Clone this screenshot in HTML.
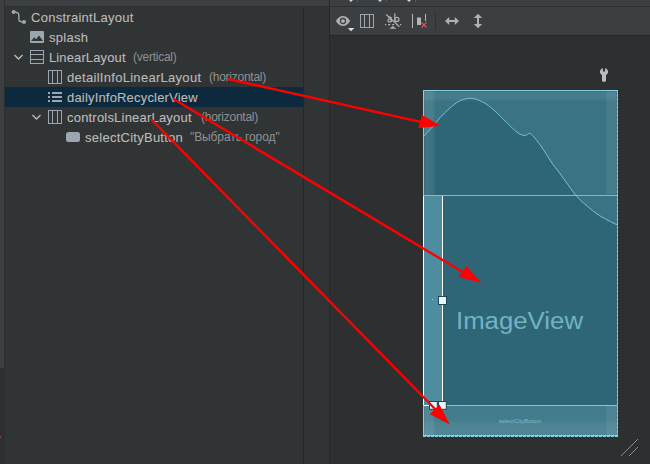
<!DOCTYPE html>
<html><head><meta charset="utf-8">
<style>
html,body{margin:0;padding:0;}
body{width:650px;height:464px;position:relative;overflow:hidden;background:#313434;font-family:"Liberation Sans",sans-serif;}
.a{position:absolute;}
.t{position:absolute;white-space:pre;font-size:13px;color:#bbbbbb;line-height:16px;-webkit-text-stroke:0.1px #bbbbbb;}
.g{position:absolute;white-space:pre;font-size:12px;color:#8e9193;line-height:14px;letter-spacing:-0.25px}
</style></head><body>
<!-- left strip -->
<div class="a" style="left:0;top:0;width:4px;height:368px;background:#3c3f41"></div>
<div class="a" style="left:0;top:368px;width:4px;height:96px;background:#2e2f31"></div>
<div class="a" style="left:0;top:436px;width:1px;height:2px;background:#a03c3c"></div>
<div class="a" style="left:4px;top:0;width:1px;height:464px;background:#2d2f30"></div>
<!-- top strip left -->
<div class="a" style="left:5px;top:0;width:324px;height:6px;background:#3c3f41"></div>
<div class="a" style="left:5px;top:6px;width:324px;height:1px;background:#2d2f30"></div>
<!-- divider -->
<div class="a" style="left:303px;top:7px;width:1px;height:457px;background:#262828;box-shadow:0 0 1px #2a2c2c"></div>
<div class="a" style="left:329px;top:0;width:1px;height:464px;background:#282929"></div>
<!-- selection -->
<div class="a" style="left:5px;top:87px;width:298px;height:20px;background:#0d293e"></div>

<!-- tree texts -->
<div class="t" style="left:31px;top:10px;letter-spacing:0.27px">ConstraintLayout</div>
<div class="t" style="left:49px;top:30px;letter-spacing:0.28px">splash</div>
<div class="t" style="left:49px;top:50px;letter-spacing:0.12px">LinearLayout</div>
<div class="g" style="left:133px;top:50px">(vertical)</div>
<div class="t" style="left:67px;top:70px;letter-spacing:0.29px">detailInfoLinearLayout</div>
<div class="g" style="left:209px;top:70px">(horizontal)</div>
<div class="t" style="left:67px;top:90px;letter-spacing:0.18px">dailyInfoRecyclerView</div>
<div class="t" style="left:67px;top:110px;letter-spacing:0.2px">controlsLinearLayout</div>
<div class="g" style="left:201px;top:110px">(horizontal)</div>
<div class="t" style="left:85px;top:130px;letter-spacing:0.26px">selectCityButton</div>
<div class="g" style="left:190px;top:130px;letter-spacing:-0.1px">"Выбрать город"</div>

<!-- tree icons -->
<svg class="a" style="left:0;top:0" width="100" height="150" viewBox="0 0 100 150">
  <g fill="none" stroke="#9aa7b0" stroke-width="1.4">
    <path d="M13.6 12 C17 12 18.8 12.5 18.8 15 L18.8 19.5 C18.8 21.5 20.5 22 24 22"/>
  </g>
  <circle cx="13.6" cy="12" r="2" fill="#9aa7b0"/>
  <circle cx="24" cy="22" r="2" fill="#9aa7b0"/>
  <!-- splash -->
  <rect x="30" y="31" width="14" height="12" rx="1" fill="#9aa7b0"/>
  <path d="M31 41 L34.3 37.2 L36 39.2 L39 35.4 L43 41 Z" fill="#313434"/>
  <!-- chevrons -->
  <path d="M14.5 55 L18.5 59 L22.5 55" fill="none" stroke="#bcbec0" stroke-width="1.3"/>
  <path d="M32.5 115 L36.5 119 L40.5 115" fill="none" stroke="#bcbec0" stroke-width="1.3"/>
  <!-- vertical linear -->
  <g fill="none" stroke="#9aa7b0" stroke-width="1">
    <rect x="30.5" y="50.5" width="13" height="13"/>
    <path d="M30.5 54.5 H43.5 M30.5 59.5 H43.5"/>
    <rect x="48.5" y="70.5" width="13" height="13"/>
    <path d="M52.5 70.5 V83.5 M57.5 70.5 V83.5"/>
    <rect x="48.5" y="110.5" width="13" height="13"/>
    <path d="M52.5 110.5 V123.5 M57.5 110.5 V123.5"/>
  </g>
  <!-- list -->
  <g fill="#9aa7b0">
    <rect x="48" y="92" width="2" height="2"/><rect x="52" y="92" width="10" height="2"/>
    <rect x="48" y="96" width="2" height="2"/><rect x="52" y="96" width="10" height="2"/>
    <rect x="48" y="100" width="2" height="2"/><rect x="52" y="100" width="10" height="2"/>
  </g>
  <!-- button -->
  <rect x="66" y="132" width="14" height="10" rx="2.5" fill="#9aa7b0"/>
</svg>

<!-- right panel -->
<div class="a" style="left:330px;top:0;width:320px;height:464px;background:#2e2f31"></div>
<div class="a" style="left:330px;top:0;width:320px;height:6px;background:#3c3f41"></div>
<div class="a" style="left:330px;top:6px;width:320px;height:1px;background:#2d2f30"></div>
<div class="a" style="left:330px;top:7px;width:320px;height:28px;background:#3c3f41"></div>
<div class="a" style="left:330px;top:35px;width:320px;height:1px;background:#262727"></div>

<!-- toolbar icons -->
<svg class="a" style="left:330px;top:0" width="320" height="36" viewBox="330 0 320 36">
  <g fill="#d6d6d6">
    <path d="M349 0 L353 0 L351 2 Z"/>
    <path d="M378 0 L382 0 L380 2 Z"/>
    <path d="M407 0 L411 0 L409 2 Z"/>
  </g>
  <g fill="#55585a">
    <rect x="357" y="0" width="1" height="2"/><rect x="386" y="0" width="1" height="2"/><rect x="415" y="0" width="1" height="2"/>
  </g>
  <!-- eye -->
  <path d="M335.8 21 C338.3 17.2 340.8 16 343 16 C345.2 16 347.7 17.2 350.2 21 C347.7 24.8 345.2 26 343 26 C340.8 26 338.3 24.8 335.8 21 Z" fill="#afafaf"/>
  <circle cx="343" cy="21" r="2.5" fill="none" stroke="#3c3f41" stroke-width="1.3"/>
  <circle cx="343" cy="21" r="1.6" fill="#afafaf"/>
  <path d="M347.8 28 L354.3 28 L351 31.2 Z" fill="#dcdcdc"/>
  <!-- columns -->
  <g fill="none" stroke="#9aa7b0" stroke-width="1">
    <rect x="360.5" y="14.5" width="13" height="13"/>
    <path d="M364.5 14.5 V27.5 M369.5 14.5 V27.5"/>
  </g>
  <!-- ab icon -->
  <g fill="none" stroke="#acacac" stroke-width="1.3">
    <path d="M386.2 14.5 L399.4 26.8"/>
    <path d="M388 17.3 C389.5 16.8 391.4 17 391.4 18.8 L391.4 22"/>
    <circle cx="389.6" cy="20.4" r="1.6"/>
    <path d="M394.8 13.3 L394.8 21.6"/>
    <ellipse cx="396.9" cy="19.4" rx="2" ry="2.1"/>
  </g>
  <g fill="#b8b8b8">
    <rect x="385" y="24" width="1.2" height="1.2"/>
    <rect x="388.2" y="24" width="2" height="1.2"/>
    <rect x="392.2" y="24" width="2" height="1.2"/>
    <rect x="400" y="24" width="1.2" height="1.2"/>
  </g>
  <path d="M389.5 28.8 L392.8 26 L396.6 28.8 Z" fill="#b0b0b0"/>
  <!-- clear constraints -->
  <rect x="412" y="14" width="1" height="14" fill="#b5b5b5"/>
  <rect x="417" y="17.5" width="4" height="7.5" fill="#b5b5b5"/>
  <rect x="425" y="14" width="1" height="7" fill="#b5b5b5"/>
  <path d="M421.5 22.5 L426.5 27.5 M426.5 22.5 L421.5 27.5" stroke="#d9534f" stroke-width="1.3"/>
  <!-- separator -->
  <rect x="435" y="11" width="1" height="19" fill="#313335"/>
  <!-- h arrow -->
  <path d="M445 21 L449.2 16.9 L449.2 20 L454.8 20 L454.8 16.9 L459 21 L454.8 25.1 L454.8 22 L449.2 22 L449.2 25.1 Z" fill="#b0b0b0"/>
  <!-- v arrow -->
  <path d="M478 13.8 L482.2 18 L479 18 L479 24 L482.2 24 L478 28.3 L473.8 24 L477 24 L477 18 L473.8 18 Z" fill="#b0b0b0"/>
</svg>

<!-- wrench -->
<svg class="a" style="left:594px;top:62px" width="20" height="26" viewBox="594 62 20 26">
  <path d="M602.9 67.9 C600.8 68.6 599.9 70.3 599.9 71.8 C599.9 73.4 601 74.6 602 75 L602 80.3 C602 81.3 602.9 82 604 82 C605.1 82 606 81.3 606 80.3 L606 75 C607 74.6 608.1 73.4 608.1 71.8 C608.1 70.3 607.2 68.6 605.1 67.9 L605.1 71.5 L602.9 71.5 Z" fill="#bdbdbd"/>
</svg>
<!-- blueprint -->
<svg class="a" style="left:423px;top:90px" width="195" height="347" viewBox="423 90 195 347">
  <defs>
    <linearGradient id="bh" x1="0" x2="1" y1="0" y2="0">
      <stop offset="0" stop-color="#ffffff" stop-opacity="0.03"/>
      <stop offset="0.15" stop-color="#ffffff" stop-opacity="0.09"/>
      <stop offset="0.7" stop-color="#ffffff" stop-opacity="0.08"/>
      <stop offset="1" stop-color="#ffffff" stop-opacity="0"/>
    </linearGradient>
    <linearGradient id="bhr" x1="1" x2="0" y1="0" y2="0">
      <stop offset="0" stop-color="#ffffff" stop-opacity="0.02"/>
      <stop offset="0.15" stop-color="#ffffff" stop-opacity="0.07"/>
      <stop offset="0.85" stop-color="#ffffff" stop-opacity="0.06"/>
      <stop offset="1" stop-color="#000000" stop-opacity="0.03"/>
    </linearGradient>
    <linearGradient id="bv" x1="0" x2="0" y1="0" y2="1">
      <stop offset="0" stop-color="#000000" stop-opacity="0.05"/>
      <stop offset="0.15" stop-color="#ffffff" stop-opacity="0.07"/>
      <stop offset="0.7" stop-color="#ffffff" stop-opacity="0.06"/>
      <stop offset="1" stop-color="#ffffff" stop-opacity="0"/>
    </linearGradient>
    <linearGradient id="bb" x1="0" x2="0" y1="1" y2="0">
      <stop offset="0" stop-color="#ffffff" stop-opacity="0.08"/>
      <stop offset="0.8" stop-color="#ffffff" stop-opacity="0.05"/>
      <stop offset="1" stop-color="#ffffff" stop-opacity="0"/>
    </linearGradient>
  </defs>
  <rect x="423" y="90" width="195" height="347" fill="#2f6677"/>
  <!-- area above curve lighter -->
  <path id="above" d="M617.5 90 L423.5 90 L423.5 136.4 C424.9 134.9 429.2 130.5 432.0 127.4 C434.8 124.3 437.1 120.8 440.0 117.7 C442.9 114.6 446.1 111.4 449.2 108.7 C452.3 106.0 455.4 103.2 458.5 101.5 C461.6 99.8 464.9 98.9 467.7 98.5 C470.5 98.1 472.3 98.2 475.1 98.9 C477.9 99.6 481.4 101.2 484.3 102.9 C487.2 104.6 489.5 106.3 492.6 108.9 C495.7 111.5 499.8 115.7 502.8 118.6 C505.8 121.5 508.1 124.0 510.5 126.3 C512.9 128.6 515.2 130.8 517.0 132.2 C518.8 133.6 519.8 134.1 521.0 134.6 C522.2 135.1 523.1 135.3 524.1 135.4 C525.1 135.5 525.9 135.3 526.7 135.0 C527.5 134.7 527.9 133.3 528.9 133.4 C529.9 133.5 530.6 133.5 532.5 135.4 C534.4 137.3 537.9 141.9 540.3 145.1 C542.7 148.3 544.7 151.7 546.7 154.8 C548.7 157.9 550.5 160.9 552.5 163.8 C554.5 166.7 556.4 168.6 559.0 172.1 C561.6 175.6 565.3 181.0 568.1 184.9 C570.9 188.8 572.9 192.0 575.9 195.4 C578.9 198.8 582.2 201.9 586.2 205.3 C590.2 208.7 594.6 212.5 599.8 215.8 C605.0 219.1 614.5 223.6 617.5 225.1 Z" fill="#3a7383"/>
  <!-- top section bands -->
  <rect x="424" y="91" width="193" height="11" fill="url(#bv)"/>
  <rect x="424" y="91" width="12" height="104" fill="url(#bh)"/>
  <rect x="605" y="91" width="12" height="103" fill="url(#bhr)"/>
  <!-- curve -->
  <path d="M423.5 136.4 C424.9 134.9 429.2 130.5 432.0 127.4 C434.8 124.3 437.1 120.8 440.0 117.7 C442.9 114.6 446.1 111.4 449.2 108.7 C452.3 106.0 455.4 103.2 458.5 101.5 C461.6 99.8 464.9 98.9 467.7 98.5 C470.5 98.1 472.3 98.2 475.1 98.9 C477.9 99.6 481.4 101.2 484.3 102.9 C487.2 104.6 489.5 106.3 492.6 108.9 C495.7 111.5 499.8 115.7 502.8 118.6 C505.8 121.5 508.1 124.0 510.5 126.3 C512.9 128.6 515.2 130.8 517.0 132.2 C518.8 133.6 519.8 134.1 521.0 134.6 C522.2 135.1 523.1 135.3 524.1 135.4 C525.1 135.5 525.9 135.3 526.7 135.0 C527.5 134.7 527.9 133.3 528.9 133.4 C529.9 133.5 530.6 133.5 532.5 135.4 C534.4 137.3 537.9 141.9 540.3 145.1 C542.7 148.3 544.7 151.7 546.7 154.8 C548.7 157.9 550.5 160.9 552.5 163.8 C554.5 166.7 556.4 168.6 559.0 172.1 C561.6 175.6 565.3 181.0 568.1 184.9 C570.9 188.8 572.9 192.0 575.9 195.4 C578.9 198.8 582.2 201.9 586.2 205.3 C590.2 208.7 594.6 212.5 599.8 215.8 C605.0 219.1 614.5 223.6 617.5 225.1" fill="none" stroke="#78c3d4" stroke-width="1"/>
  <!-- bottom button region -->
  <rect x="424" y="406" width="193" height="30" fill="#437c8d"/>
  <rect x="424" y="420" width="193" height="16" fill="url(#bb)"/>
  <rect x="424" y="406" width="12" height="30" fill="url(#bh)"/>
  <rect x="605" y="406" width="12" height="30" fill="url(#bhr)"/>
  <!-- lines -->
  <rect x="423" y="195" width="195" height="1" fill="#74bfd1"/>
  <rect x="423" y="405" width="195" height="1" fill="#7cc6d8"/>
  <!-- selected column -->
  <rect x="424" y="196" width="18" height="209" fill="#4e8c9f"/>
  <path d="M423.5 195.5 V405.5 H442.5 V196" fill="none" stroke="#ffffff" stroke-width="1"/>
  <!-- border -->
  <rect x="423" y="90" width="195" height="1" fill="#84d0e3"/>
  <rect x="423" y="90" width="1" height="106" fill="#84d0e3"/>
  <rect x="423" y="405" width="1" height="31" fill="#84d0e3"/>
  <path d="M617.5 90 V436" stroke="#84d0e3" stroke-width="1" stroke-dasharray="3 1"/>
  <path d="M617.5 90 V436" stroke="#5aa0b2" stroke-width="1" stroke-dasharray="0 3 1 0"/>
  <rect x="423" y="435" width="195" height="1" fill="#84d0e3"/>
  <path d="M423 436.5 H618" stroke="#84d0e3" stroke-width="1" stroke-dasharray="3 1"/>
  <!-- handles -->
  <rect x="438.5" y="296.5" width="8" height="8" fill="#e6f6fb" stroke="#1e4653" stroke-width="1"/>
  <rect x="429.5" y="401.5" width="7.8" height="7.8" fill="#e6f6fb" stroke="#1e4653" stroke-width="1"/>
  <rect x="438.5" y="401.5" width="7.8" height="7.8" fill="#e6f6fb" stroke="#1e4653" stroke-width="1"/>
  <rect x="432" y="299" width="1" height="1" fill="#8fd0e3"/>
  <text x="456" y="329" font-family="Liberation Sans" font-size="23" textLength="127" lengthAdjust="spacingAndGlyphs" fill="#72b3c3">ImageView</text>
  <text x="499" y="423" font-family="Liberation Sans" font-size="6" textLength="42" lengthAdjust="spacingAndGlyphs" fill="#7fbccb">selectCityButton</text>
</svg>

<!-- resize handle -->
<svg class="a" style="left:615px;top:432px" width="30" height="30" viewBox="615 432 30 30">
  <path d="M621 456 L638 439 M629 456 L638 447" stroke="#8a8c8e" stroke-width="1"/>
</svg>

<!-- arrows -->
<svg class="a" style="left:0;top:0" width="650" height="464" viewBox="0 0 650 464">
  <g stroke="#ff0000" stroke-width="2.4" fill="none">
    <path d="M228 79 L425 122.8"/>
    <path d="M173 98.8 L466 274"/>
    <path d="M151 119 L440 414"/>
  </g>
  <g fill="#ff0000">
    <path d="M440.8 125.8 L422 115.1 L418.2 127.9 Z"/>
    <path d="M481 282.8 L458.5 277 L466.5 266 Z"/>
    <path d="M449.7 424.6 L430 414.2 L439.4 404.5 Z"/>
  </g>
</svg>
</body></html>
